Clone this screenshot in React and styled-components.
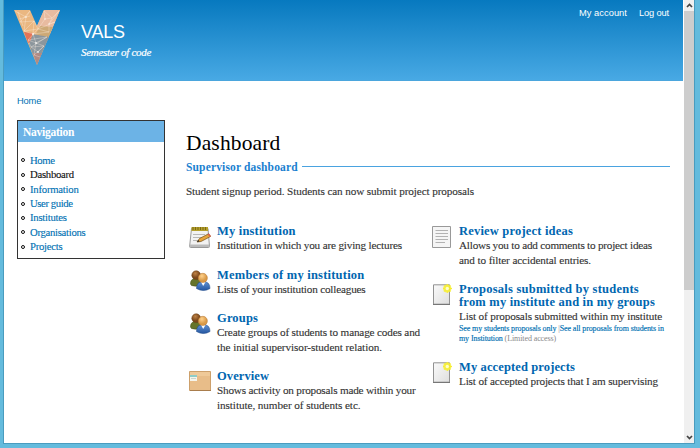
import React from "react";
import styled, { createGlobalStyle } from "styled-components";

const SERIF = '"Liberation Serif", "Times New Roman", serif';
const SANS = '"Liberation Sans", Arial, sans-serif';

const GlobalStyle = createGlobalStyle`
  *, *::before, *::after { box-sizing: border-box; }
  body { margin: 0; overflow: hidden; }
`;

const Desktop = styled.div`
  height: 448px;
  width: 700px;
  padding: 0 5px 4px 3px;
  background: #64bbdd;
  font-family: ${SERIF};
`;

const Window = styled.div`
  display: flex;
  height: 444px;
  border: solid #4a9cbf;
  border-width: 0 1px 1px 1px;
  background: #fff;
`;

const Page = styled.div`
  width: 680px;
  flex: none;
`;

const Header = styled.header`
  display: flex;
  width: 679px;
  height: 81px;
  padding: 9px 14px 0 10px;
  background: linear-gradient(#0779bf, #48a9e4);
  border-bottom: 1px solid #4ba6dd;
  color: #fff;
`;

const Branding = styled.div`
  margin: 13px 0 0 21px;
  flex: 1;
`;

const SiteName = styled.div`
  font: 18px/20px ${SANS};
  letter-spacing: -0.2px;
`;

const Slogan = styled.div`
  margin-top: 4px;
  font: italic 11px/13px ${SERIF};
  letter-spacing: -0.28px;
  -webkit-text-stroke: 0.2px #fff;
`;

const UserMenu = styled.nav`
  display: flex;
  gap: 12px;
  margin-top: -1px;
  font: 9.3px/11px ${SANS};
`;

const MenuLink = styled.a`
  letter-spacing: ${(p) => p.$track}px;
`;

const Breadcrumb = styled.div`
  margin: 15px 0 0 13px;
  font: 9.3px/11px ${SANS};
  letter-spacing: -0.15px;
  color: #0071b3;
`;

const Columns = styled.div`
  display: flex;
  align-items: flex-start;
  padding: 13px 14px 0 13px;
`;

const Sidebar = styled.aside`
  width: 148px;
  height: 139px;
  flex: none;
  border: 1px solid #333;
`;

const SidebarTitle = styled.h2`
  margin: 0;
  height: 21px;
  padding-left: 5px;
  background: #6cb3e6;
  color: #fff;
  font: bold 11.5px/22px ${SERIF};
  letter-spacing: -0.25px;
`;

const NavList = styled.ul`
  margin: 10.8px 0 0;
  padding: 0;
  list-style: none;
`;

const NavItem = styled.li`
  display: flex;
  align-items: center;
  height: 14.35px;
  padding-left: 3px;
  gap: 5px;
  font-size: 10.7px;
  line-height: 14px;
  letter-spacing: ${(p) => p.$track}px;
  color: ${(p) => (p.$active ? "#111" : "#0071b3")};
  -webkit-text-stroke: 0.12px currentColor;
  &::before {
    content: "";
    width: 4px;
    height: 4px;
    margin-top: 1px;
    border: 1px solid #111;
    border-radius: 50%;
  }
`;

const Main = styled.main`
  flex: 1;
  min-width: 0;
  margin-left: 21px;
  padding-top: 10px;
  color: #333;
`;

const PageTitle = styled.h1`
  margin: 0;
  font: 21.5px/26px ${SERIF};
  letter-spacing: 0.15px;
  color: #000;
`;

const SectionTitle = styled.h2`
  display: flex;
  align-items: center;
  margin: 4px 0 0;
  height: 14px;
  gap: 4px;
  font: bold 11.5px/14px ${SERIF};
  letter-spacing: 0.15px;
  color: #1a7fd0;
  &::after {
    content: "";
    flex: 1;
    height: 1px;
    margin-bottom: 1px;
    background: #4aa3e0;
  }
`;

const Intro = styled.p`
  margin: 10px 0 0;
  font-size: 11.2px;
  line-height: 14px;
  letter-spacing: -0.117px;
  white-space: nowrap;
  -webkit-text-stroke: 0.12px currentColor;
`;

const Grid = styled.div`
  display: grid;
  grid-template-columns: 243px 241px;
  margin-top: 27px;
  padding-left: 3px;
`;

const Column = styled.div`
  display: flex;
  flex-direction: column;
  gap: 16px;
`;

const Card = styled.section`
  display: flex;
  gap: ${(p) => (p.$wideGap ? 7 : 6)}px;
`;

const IconSlot = styled.div`
  width: ${(p) => p.$width}px;
  height: 24px;
  margin: 1px 0 -12px;
  flex: none;
`;

const Body = styled.div`
  white-space: nowrap;
`;

const Title = styled.div`
  font-size: 12.5px;
  font-weight: bold;
  line-height: 13px;
  color: #0066b0;
  letter-spacing: ${(p) => p.$track}px;
`;

const Text = styled.div`
  font-size: 11.2px;
  line-height: 14.5px;
  letter-spacing: ${(p) => p.$track}px;
  -webkit-text-stroke: 0.12px currentColor;
`;

const Fine = styled.div`
  font-size: 8px;
  line-height: 10.5px;
  letter-spacing: ${(p) => p.$track}px;
  color: #888;
`;

const FineLink = styled.a`
  color: #0071b3;
  -webkit-text-stroke: 0.15px #0071b3;
`;

const LogoSvg = styled.svg`
  display: block;
  width: 46px;
  height: 56px;
  flex: none;
`;

const IconSvg = styled.svg`
  display: block;
`;

const ScrollTrack = styled.div`
  display: flex;
  flex-direction: column;
  flex: 1;
  background: #f0f0f0;
`;

const ScrollArrow = styled.div`
  display: flex;
  align-items: center;
  justify-content: center;
  height: 11px;
  flex: none;
`;

const ScrollThumb = styled.div`
  height: 279px;
  background: #cdcdcd;
`;

const ScrollSpace = styled.div`
  flex: 1;
`;

const Logo = () => (
  <LogoSvg viewBox="0 0 46 56">
    <path d="M0 1H16L23 17L30 1H46L23 56Z" fill="#eab781" />
    <path d="M30 1H46L36 25L23 17Z" fill="#e8bba0" />
    <path d="M26 17L39 18L34 29L22 25Z" fill="#cda976" />
    <path d="M10 23L19 24L16 34L14 34Z" fill="#e37458" />
    <path d="M19 25L35 28L27 46H19L15 35Z" fill="#8c969d" />
    <path d="M18.8 44L28 44L23 56Z" fill="#b08a84" />
    <path
      d="M1 2L12 8L16 2L6 13L20 12L10 22L24 20L14 31L33 28L17 38L30 37L20 46L26 48M12 8L10 22L19 25L20 12L24 20L31 10L30 2L38 9L45 2L35 15L41 13L24 20L35 23L19 25L22 34L33 28M31 10L38 9L35 15L35 23M22 34L14 31L17 38L24 43L30 37L22 34L20 46M4 3L9 17M5 10L16 7"
      fill="none"
      stroke="#fff4e6"
      strokeWidth="0.5"
      opacity="0.65"
    />
    <g fill="#fff" opacity="0.8">
      <circle cx="12" cy="8" r="0.8" /><circle cx="31" cy="10" r="0.8" />
      <circle cx="19" cy="25" r="1" /><circle cx="22" cy="34" r="0.9" />
      <circle cx="24" cy="43" r="0.9" /><circle cx="35" cy="15" r="0.7" />
    </g>
  </LogoSvg>
);

const NotepadIcon = () => (
  <IconSvg width="23" height="23" viewBox="0 0 23 23">
    <path d="M2.5 2.5H19L20.5 20.5Q20.5 21.5 19.5 21.5H1.5Q.5 21.5 .6 20.5Z" fill="#f2f2f2" stroke="#999" />
    <path d="M1 18.5H20L20.5 21H.8Z" fill="#bbb" />
    <path d="M2.5 1H19V5H2.5Z" fill="#b5a02c" />
    <path d="M4 1V4M6.5 1V4M9 1V4M11.5 1V4M14 1V4M16.5 1V4" stroke="#6c5c10" strokeWidth=".8" />
    <path d="M4 8.5H16M4 11.5H13M4 14.5H9" stroke="#b8b8b8" />
    <path d="M8 16L10.5 12.5L19.5 7.8L21.5 10.5L12 15.5Z" fill="#e5a43b" stroke="#755018" strokeWidth=".7" />
    <path d="M18.5 8.3L20 7.5L22 10L20.8 11Z" fill="#d5604c" />
    <path d="M8 16L9.5 14L10.5 15.5Z" fill="#222" />
  </IconSvg>
);

const PeopleIcon = () => (
  <IconSvg width="23" height="22" viewBox="0 0 23 22">
    <defs>
      <radialGradient id="faceBack" cx=".4" cy=".3"><stop stopColor="#bf8346" /><stop offset="1" stopColor="#78451a" /></radialGradient>
      <radialGradient id="faceFront" cx=".4" cy=".3"><stop stopColor="#ffd18b" /><stop offset="1" stopColor="#d99a48" /></radialGradient>
      <linearGradient id="shirt" x2="0" y2="1"><stop stopColor="#6293d4" /><stop offset="1" stopColor="#2456a1" /></linearGradient>
    </defs>
    <path d="M1.5 14Q1.5 8.5 6.5 8.5Q12 8.5 12 15Q7 17 2.5 15.5Z" fill="#65742a" stroke="#46531a" strokeWidth=".6" />
    <circle cx="7.2" cy="5.2" r="4.4" fill="url(#faceBack)" stroke="#6b4016" strokeWidth=".5" />
    <path d="M7.5 18.5Q7.5 11.5 14 11.5Q21 11.5 21 18.5Q14.5 22.5 7.5 18.5Z" fill="url(#shirt)" stroke="#204c8c" strokeWidth=".6" />
    <path d="M12 12H16.5L14.2 16Z" fill="#fff" />
    <circle cx="13.8" cy="7.9" r="4.6" fill="url(#faceFront)" stroke="#b4732c" strokeWidth=".5" />
  </IconSvg>
);

const BoxIcon = () => (
  <IconSvg width="23" height="22" viewBox="0 0 23 22">
    <path d="M.5 .5H21.5V19.5H.5Z" fill="#e8bd89" stroke="#cda06b" />
    <path d="M1 1H21V5H1Z" fill="#efc998" />
    <path d="M1 19.5H22" stroke="#a97d4d" />
    <path d="M1 4H8V10H1Z" fill="#f5f4eb" />
    <path d="M1 5H8" stroke="#55b6b4" strokeWidth="1.3" />
    <path d="M2 7.5H7" stroke="#b8c7c2" strokeWidth=".7" />
  </IconSvg>
);

const DocumentIcon = () => (
  <IconSvg width="20" height="23" viewBox="0 0 20 23">
    <path d="M.5 .5H18.5V21.5H.5Z" fill="#f5f5f5" stroke="#999" />
    <path d="M3.5 4.5H16M3.5 7.5H16M3.5 10.5H16M3.5 13.5H16M3.5 16.5H13" stroke="#b2b2b2" />
  </IconSvg>
);

const NewDocumentIcon = () => (
  <IconSvg width="20" height="23" viewBox="0 0 20 23">
    <defs>
      <linearGradient id="paper" x2="1" y2="1"><stop stopColor="#fafafa" /><stop offset="1" stopColor="#dedede" /></linearGradient>
    </defs>
    <path d="M1.5 .8H17.5V20.2H1.5Z" fill="url(#paper)" stroke="#929292" />
    <path d="M1 20.5H18" stroke="#777" />
    <circle cx="15.3" cy="4.5" r="4.1" fill="#f6ee32" opacity=".85" />
    <path d="M15.3 0V9M11 4.5H20M12.2 1.4L18.4 7.6M18.4 1.4L12.2 7.6" stroke="#f8ee33" />
    <circle cx="15.3" cy="4.5" r="1.7" fill="#ffffc9" />
  </IconSvg>
);

const Chevron = ({ down }) => (
  <IconSvg width="7" height="5" viewBox="0 0 7 5">
    <path d={down ? "M1 1L3.5 3.5L6 1" : "M1 4L3.5 1.5L6 4"} fill="none" stroke="#444" strokeWidth="1.7" />
  </IconSvg>
);

const NAV = [
  ["Home", -0.35],
  ["Dashboard", -0.27],
  ["Information", -0.23],
  ["User guide", -0.4],
  ["Institutes", -0.25],
  ["Organisations", -0.29],
  ["Projects", -0.25],
];

const LEFT = [
  { icon: NotepadIcon, titles: [["My institution", 0.19]], lines: [["Institution in which you are giving lectures", -0.174]] },
  { icon: PeopleIcon, titles: [["Members of my institution", 0.22]], lines: [["Lists of your institution colleagues", -0.191]] },
  {
    icon: PeopleIcon,
    titles: [["Groups", 0.16]],
    lines: [["Create groups of students to manage codes and", -0.163], ["the initial supervisor-student relation.", -0.064]],
  },
  {
    icon: BoxIcon,
    titles: [["Overview", 0.09]],
    lines: [["Shows activity on proposals made within your", -0.206], ["institute, number of students etc.", -0.074]],
  },
];

const RIGHT = [
  {
    icon: DocumentIcon,
    titles: [["Review project ideas", 0.19]],
    lines: [["Allows you to add comments to project ideas", -0.216], ["and to filter accidental entries.", -0.113]],
  },
  {
    icon: NewDocumentIcon,
    titles: [["Proposals submitted by students", 0.245], ["from my institute and in my groups", 0.2]],
    lines: [["List of proposals submitted within my institute", -0.137]],
    links: true,
  },
  { icon: NewDocumentIcon, titles: [["My accepted projects", 0.12]], lines: [["List of accepted projects that I am supervising", -0.162]] },
];

const DashboardCard = ({ item, wide }) => {
  const Icon = item.icon;
  return (
    <Card $wideGap={!wide}>
      <IconSlot $width={wide ? 22 : 20}><Icon /></IconSlot>
      <Body>
        {item.titles.map(([t, k]) => <Title key={t} $track={k}>{t}</Title>)}
        {item.lines.map(([t, k]) => <Text key={t} $track={k}>{t}</Text>)}
        {item.links && (
          <>
            <Fine $track={-0.12}>
              <FineLink>See my students proposals only</FineLink> |<FineLink>See all proposals from students in</FineLink>
            </Fine>
            <Fine $track={-0.1}><FineLink>my Institution</FineLink> (Limited access)</Fine>
          </>
        )}
      </Body>
    </Card>
  );
};

export default function App() {
  return (
    <Desktop>
      <GlobalStyle />
      <Window>
        <Page>
          <Header>
            <Logo />
            <Branding>
              <SiteName>VALS</SiteName>
              <Slogan>Semester of code</Slogan>
            </Branding>
            <UserMenu>
              <MenuLink $track={0.046}>My account</MenuLink>
              <MenuLink $track={-0.14}>Log out</MenuLink>
            </UserMenu>
          </Header>
          <Breadcrumb>Home</Breadcrumb>
          <Columns>
            <Sidebar>
              <SidebarTitle>Navigation</SidebarTitle>
              <NavList>
                {NAV.map(([t, k]) => <NavItem key={t} $track={k} $active={t === "Dashboard"}>{t}</NavItem>)}
              </NavList>
            </Sidebar>
            <Main>
              <PageTitle>Dashboard</PageTitle>
              <SectionTitle>Supervisor dashboard</SectionTitle>
              <Intro>Student signup period. Students can now submit project proposals</Intro>
              <Grid>
                <Column>{LEFT.map((i) => <DashboardCard key={i.titles[0][0]} item={i} wide />)}</Column>
                <Column>{RIGHT.map((i) => <DashboardCard key={i.titles[0][0]} item={i} />)}</Column>
              </Grid>
            </Main>
          </Columns>
        </Page>
        <ScrollTrack>
          <ScrollArrow><Chevron /></ScrollArrow>
          <ScrollThumb />
          <ScrollSpace />
          <ScrollArrow><Chevron down /></ScrollArrow>
        </ScrollTrack>
      </Window>
    </Desktop>
  );
}
